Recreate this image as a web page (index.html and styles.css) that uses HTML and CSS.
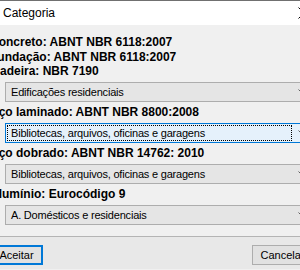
FILE: index.html
```html
<!DOCTYPE html>
<html>
<head>
<meta charset="utf-8">
<link rel="stylesheet" href="styles.css">
</head>
<body>
<div class="window">
  <div class="titlebar">
    <span class="title">Categoria</span>
    <svg class="close" width="12" height="12" viewBox="0 0 12 12"><path d="M0.5 0.5 L11.5 11.5 M11.5 0.5 L0.5 11.5" stroke="#000" stroke-width="1" fill="none"/></svg>
  </div>
  <div class="content">
    <div class="labels">
      <p>Concreto: ABNT NBR 6118:2007</p>
      <p>Fundação: ABNT NBR 6118:2007</p>
      <p>Madeira: NBR 7190</p>
    </div>
    <div class="select">
      <span class="value">Edificações residenciais</span>
      <svg class="arrow" width="8" height="5" viewBox="0 0 8 5"><path d="M0.5 0.5 L4 4 L7.5 0.5" stroke="#606060" fill="none"/></svg>
    </div>
    <p class="label">Aço laminado: ABNT NBR 8800:2008</p>
    <div class="select focused">
      <span class="value">Bibliotecas, arquivos, oficinas e garagens</span>
      <svg class="arrow" width="8" height="5" viewBox="0 0 8 5"><path d="M0.5 0.5 L4 4 L7.5 0.5" stroke="#606060" fill="none"/></svg>
    </div>
    <p class="label">Aço dobrado: ABNT NBR 14762: 2010</p>
    <div class="select">
      <span class="value">Bibliotecas, arquivos, oficinas e garagens</span>
      <svg class="arrow" width="8" height="5" viewBox="0 0 8 5"><path d="M0.5 0.5 L4 4 L7.5 0.5" stroke="#606060" fill="none"/></svg>
    </div>
    <p class="label">Alumínio: Eurocódigo 9</p>
    <div class="select">
      <span class="value">A. Domésticos e residenciais</span>
      <svg class="arrow" width="8" height="5" viewBox="0 0 8 5"><path d="M0.5 0.5 L4 4 L7.5 0.5" stroke="#606060" fill="none"/></svg>
    </div>
  </div>
  <div class="footer">
    <button class="btn default">Aceitar</button>
    <button class="btn cancel">Cancelar</button>
  </div>
</div>
</body>
</html>
```
FILE: styles.css
```css
html, body {
  margin: 0;
  padding: 0;
  width: 300px;
  height: 270px;
  overflow: hidden;
  background: #f0f0f0;
}
.window {
  margin-left: -14px;
  width: 344px;
  font-family: "Liberation Sans", Arial, sans-serif;
  color: #000;
}
.titlebar {
  height: 24px;
  border-top: 1px solid #707070;
  background: #fff;
  display: flex;
  align-items: center;
  position: relative;
}
.title {
  padding-left: 17px;
  font-size: 12px;
  line-height: 24px;
}
.close {
  position: absolute;
  left: 312px;
  top: 6px;
}
.content {
  padding: 10px 18px 0 19px;
}
.labels {
  margin-left: -15px;
  margin-bottom: 3.5px;
}
.labels p, .label {
  margin: 0;
  font-weight: bold;
  font-size: 12px;
  line-height: 14.5px;
  white-space: nowrap;
}
.label {
  margin-left: -15px;
  line-height: 21px;
  height: 21px;
}
.select {
  box-sizing: border-box;
  height: 20px;
  border: 1px solid #adadad;
  background: #e5e5e5;
  padding: 1px;
  display: flex;
  align-items: center;
}
.select .value {
  box-sizing: border-box;
  flex: 1;
  height: 16px;
  line-height: 14px;
  padding-left: 3px;
  font-size: 11px;
  letter-spacing: -0.2px;
  border: 1px solid transparent;
  white-space: nowrap;
}
.select .arrow {
  flex: none;
  margin: 0 4px 1px 6px;
}
.select.focused {
  border-color: #0078d7;
  background: #e5f1fb;
}
.select.focused .value {
  border: 1px dotted #000;
}
.footer {
  margin-top: 11px;
  border-top: 1px solid #b4b4b4;
  background: #e8e8e8;
  height: 33px;
  display: flex;
  justify-content: space-between;
  align-items: flex-start;
  padding: 8px 17px 0 4px;
  box-sizing: border-box;
}
.btn {
  box-sizing: border-box;
  height: 20px;
  margin: 0;
  padding: 0;
  border: 1px solid #adadad;
  background: #e1e1e1;
  font-family: "Liberation Sans", Arial, sans-serif;
  font-size: 11px;
  color: #000;
}
.btn.default {
  width: 53px;
  border: 2px solid #0078d7;
}
.btn.cancel {
  width: 61px;
}
```
